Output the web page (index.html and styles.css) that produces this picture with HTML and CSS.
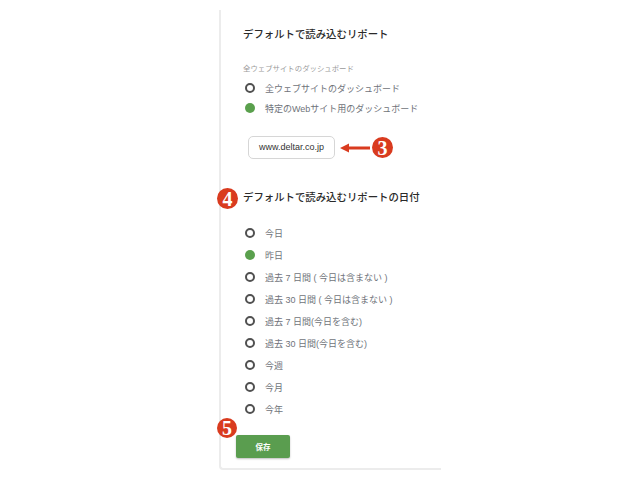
FILE: index.html
```html
<!DOCTYPE html>
<html lang="ja">
<head>
<meta charset="utf-8">
<link rel="stylesheet" href="styles.css">
</head>
<body>
<div class="card">
  <h2 class="title">デフォルトで読み込むリポート</h2>
  <div class="sublabel">全ウェブサイトのダッシュボード</div>
  <ul class="radios">
    <li class="row"><span class="radio"></span><span>全ウェブサイトのダッシュボード</span></li>
    <li class="row"><span class="radio on"></span><span>特定のWebサイト用のダッシュボード</span></li>
  </ul>
  <div class="urlrow">
    <div class="input">www.deltar.co.jp</div>
    <svg class="arrow" width="30" height="10" viewBox="0 0 30 10"><path d="M0 5 L9 0.5 L9 3.6 L30 3.6 L30 6.4 L9 6.4 L9 9.5 Z" fill="#d93b1f"/></svg>
    <span class="badge">3</span>
  </div>
  <h2 class="title title2"><span class="badge badge-abs b4">4</span>デフォルトで読み込むリポートの日付</h2>
  <ul class="radios dates">
    <li class="row"><span class="radio"></span><span>今日</span></li>
    <li class="row"><span class="radio on"></span><span>昨日</span></li>
    <li class="row"><span class="radio"></span><span>過去 7 日間 ( 今日は含まない )</span></li>
    <li class="row"><span class="radio"></span><span>過去 30 日間 ( 今日は含まない )</span></li>
    <li class="row"><span class="radio"></span><span>過去 7 日間(今日を含む)</span></li>
    <li class="row"><span class="radio"></span><span>過去 30 日間(今日を含む)</span></li>
    <li class="row"><span class="radio"></span><span>今週</span></li>
    <li class="row"><span class="radio"></span><span>今月</span></li>
    <li class="row"><span class="radio"></span><span>今年</span></li>
  </ul>
  <div class="btnwrap">
    <span class="badge badge-abs b5">5</span>
    <button class="save">保存</button>
  </div>
</div>
</body>
</html>
```

FILE: styles.css
```css
html, body {
  margin: 0;
  padding: 0;
  background: #ffffff;
}
body {
  font-family: "Liberation Sans", "Noto Sans CJK JP", sans-serif;
  width: 640px;
  height: 480px;
  overflow: hidden;
}
.card {
  margin: 10px 0 0 219px;
  width: 222px;
  border-left: 2px solid #ececec;
  border-bottom: 2px solid #ececec;
  border-bottom-left-radius: 4px;
  padding: 18px 0 10px 22px;
  box-sizing: border-box;
  background: #fff;
}
.title {
  margin: 0;
  font-size: 10.4px;
  line-height: 14px;
  font-weight: 500;
  color: #2a2a2a;
  white-space: nowrap;
  position: relative;
}
.sublabel {
  margin-top: 22px;
  font-size: 7.4px;
  line-height: 10px;
  color: #9a9a9a;
}
.radios {
  list-style: none;
  margin: 4px 0 0 2px;
  padding: 0;
}
.row {
  display: flex;
  align-items: center;
  gap: 10px;
  height: 20px;
  font-size: 9px;
  color: #6f737a;
  white-space: nowrap;
}
.dates {
  margin-top: 17px;
}
.dates .row {
  height: 22px;
}
.radio {
  width: 10px;
  height: 10px;
  box-sizing: border-box;
  border: 2px solid #505050;
  border-radius: 50%;
  flex: none;
}
.radio.on {
  border: none;
  background: #5aa04d;
}
.urlrow {
  display: flex;
  align-items: center;
  margin: 18px 0 0 5px;
}
.input {
  width: 87px;
  height: 23px;
  box-sizing: border-box;
  border: 1px solid #d6d6d6;
  border-radius: 5px;
  font-size: 9px;
  line-height: 21px;
  text-align: center;
  color: #333;
}
.arrow {
  margin-left: 5px;
  flex: none;
}
.badge {
  display: inline-flex;
  align-items: center;
  justify-content: center;
  width: 21px;
  height: 21px;
  border-radius: 50%;
  background: #d93b1f;
  color: #fff;
  font-family: "Liberation Serif", serif;
  font-weight: bold;
  font-size: 20px;
  line-height: 1;
  margin-left: 2px;
  flex: none;
}
.badge-abs {
  position: absolute;
  margin: 0;
}
.title2 {
  margin-top: 32px;
}
.b4 {
  left: -26px;
  top: -3px;
}
.btnwrap {
  position: relative;
  margin: 15px 0 0 -7px;
}
.b5 {
  left: -19px;
  top: -17px;
  width: 20px;
  height: 20px;
}
.save {
  display: block;
  width: 54px;
  height: 23px;
  border: none;
  border-radius: 2px;
  background: #5a9d4f;
  color: #fff;
  font-family: "Liberation Sans", "Noto Sans CJK JP", sans-serif;
  font-size: 7.5px;
  font-weight: bold;
  padding: 0;
  box-shadow: 0 1px 2px rgba(0,0,0,0.25);
}
```
